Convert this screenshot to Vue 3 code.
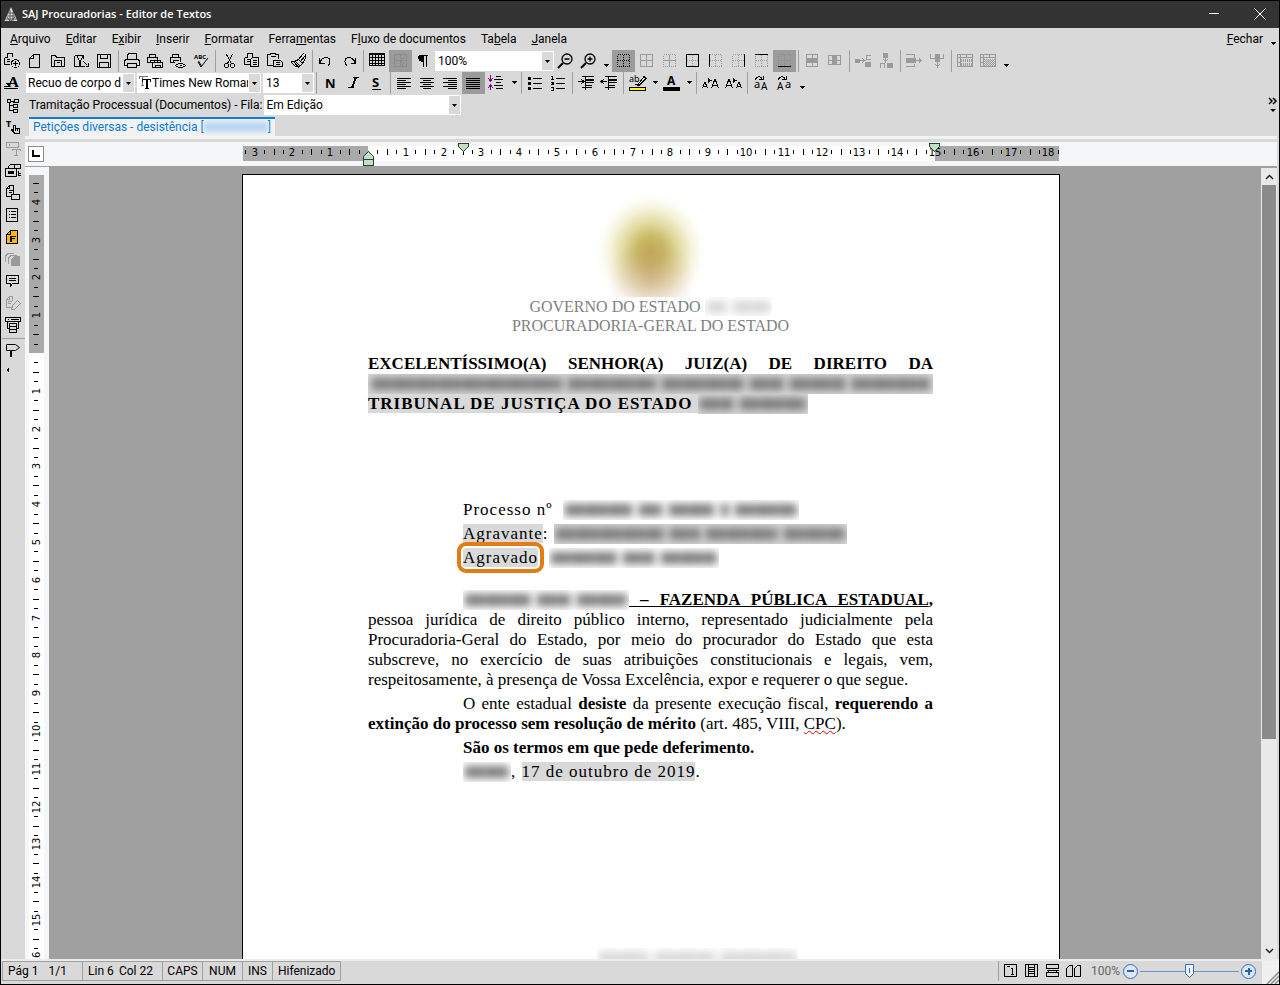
<template>
  <div class="app">
    <header class="titlebar">
      <svg class="logo" width="14" height="16" viewBox="0 0 14 16">
        <path d="M7 1L13.5 15H.5z" fill="#d8d8d8" />
        <path d="M4 7h6M3 10h8M1 13h12M6 4v11M9 6v9M3 11l3 4M11 11l-4 4" stroke="#333" stroke-width=".7" />
      </svg>
      <h1>SAJ Procuradorias - Editor de Textos</h1>
      <button class="win-btn" aria-label="Minimizar">
        <svg width="12" height="12" viewBox="0 0 12 12"><path d="M1 5.5h10" stroke="#fff" /></svg>
      </button>
      <button class="win-btn" aria-label="Sair">
        <svg width="12" height="12" viewBox="0 0 12 12"><path d="M.5.5l11 11M11.5.5l-11 11" stroke="#fff" /></svg>
      </button>
    </header>

    <nav class="menubar">
      <button v-for="m in menus" :key="m.join('')" class="menu">{{ m[0] }}<u>{{ m[1] }}</u>{{ m[2] }}</button>
      <span class="spacer"></span>
      <button class="menu close"><u>F</u>echar</button>
      <button class="more low" aria-label="Mais"><Icon name="arrow" /></button>
    </nav>

    <div class="toolbar">
      <template v-for="(item, i) in mainTools" :key="i">
        <i v-if="item === '|'" class="sep"></i>
        <button v-else-if="item === 'more'" class="more low" aria-label="Mais"><Icon name="arrow" /></button>
        <select v-else-if="item === 'zoom'" class="combo zoom" aria-label="Zoom"><option>100%</option></select>
        <button v-else class="tool" :class="{ on: pressed.includes(item) }" :aria-label="item"><Icon :name="item" /></button>
      </template>
    </div>

    <div class="toolbar">
      <button class="tool" aria-label="Estilos"><Icon name="styles" /></button>
      <select class="combo style" aria-label="Estilo"><option>Recuo de corpo d</option></select>
      <div class="font-box">
        <Icon name="font" />
        <select class="combo font" aria-label="Fonte"><option>Times New Roman</option></select>
      </div>
      <select class="combo size" aria-label="Tamanho"><option>13</option></select>
      <template v-for="(item, i) in formatTools" :key="i">
        <i v-if="item === '|'" class="sep"></i>
        <button v-else-if="item === 'drop'" class="more" aria-label="Opções"><Icon name="arrow" /></button>
        <button v-else-if="item === 'more'" class="more low" aria-label="Mais"><Icon name="arrow" /></button>
        <button v-else class="tool" :class="{ on: pressed.includes(item) }" :aria-label="item"><Icon :name="item" /></button>
      </template>
    </div>

    <div class="workspace">
      <aside class="sidebar">
        <template v-for="(item, i) in sideTools" :key="i">
          <i v-if="item === '-'" class="side-sep"></i>
          <button v-else class="side-tool" :aria-label="item"><Icon :name="item" /></button>
        </template>
      </aside>

      <main class="main">
        <div class="queue">
          <label for="fila">Tramitação Processual (Documentos) - Fila:</label>
          <select id="fila" class="combo queue-select"><option>Em Edição</option></select>
          <span class="spacer"></span>
          <button class="overflow" aria-label="Mais barras"><Icon name="chevrons" /></button>
        </div>

        <div class="tabs">
          <button class="tab">Petições diversas - desistência [<span class="tab-number"></span>]</button>
        </div>

        <div class="ruler-row">
          <button class="tab-stop" aria-label="Tabulação"></button>
          <div class="ruler-wrap">
            <svg class="ruler" width="816" height="24" viewBox="0 0 816 24">
              <rect y="4" width="816" height="15" fill="#a9a9a9" />
              <rect x="125" y="4" width="567" height="15" fill="#fff" />
              <template v-for="t in hTicks" :key="t.pos">
                <text v-if="t.label" :x="t.pos" y="14">{{ t.label }}</text>
                <rect v-else :x="t.pos" :y="t.long ? 7 : 8" width="1" :height="t.long ? 6 : 4" />
              </template>
              <g fill="#c3dfc6" stroke="#20443a">
                <path d="M120.5 17.5v-3l5-5 5 5v3zM120.5 17.5h10v6h-10z" />
                <path d="M215.5 1.5h10v3l-5 5-5-5z" />
                <path d="M686.5 1.5h10v3l-5 5-5-5z" />
              </g>
            </svg>
          </div>
        </div>

        <div class="doc-area">
          <div class="v-ruler">
            <svg class="ruler" width="15" height="1600" viewBox="0 0 15 1600">
              <rect width="15" height="1600" fill="#fff" />
              <rect width="15" height="178" fill="#a9a9a9" />
              <template v-for="t in vTicks" :key="t.pos">
                <text v-if="t.label" x="0" y="0" :transform="`translate(11 ${t.pos}) rotate(-90)`">{{ t.label }}</text>
                <rect v-else :x="t.long ? 4 : 5" :y="t.pos" :width="t.long ? 6 : 4" height="1" />
              </template>
            </svg>
          </div>

          <div class="canvas">
            <article class="page">
              <div class="crest"></div>
              <p class="agency">GOVERNO DO ESTADO <Redacted class="faint" :words="[20, 37]" /></p>
              <p class="agency">PROCURADORIA-GERAL DO ESTADO</p>

              <p class="court spread">EXCELENTÍSSIMO(A) SENHOR(A) JUIZ(A) DE DIREITO DA</p>
              <p class="court-hidden"><Redacted class="field wide" :words="[190, 88, 82, 34, 56, 78]" /></p>
              <p class="court tracked"><span class="mark">TRIBUNAL DE JUSTIÇA DO ESTADO </span><Redacted class="field" :words="[34, 66]" /></p>

              <div class="parties">
                <p>Processo nº&nbsp; <Redacted :words="[68, 24, 46, 8, 62]" /></p>
                <p><span class="mark">Agravante</span>: <Redacted class="field" :words="[108, 30, 72, 61]" /></p>
                <p><span class="mark target">Agravado</span>&nbsp; <Redacted :words="[66, 32, 56]" /></p>
              </div>

              <div class="body">
                <p class="spread indent"><Redacted :words="[66, 34, 50]" /><b><u> – FAZENDA PÚBLICA ESTADUAL</u>,</b></p>
                <p class="spread">pessoa jurídica de direito público interno, representado judicialmente pela</p>
                <p class="spread">Procuradoria-Geral do Estado, por meio do procurador do Estado que esta</p>
                <p class="spread">subscreve, no exercício de suas atribuições constitucionais e legais, vem,</p>
                <p>respeitosamente, à presença de Vossa Excelência, expor e requerer o que segue.</p>
                <p class="spread indent para">O ente estadual <b>desiste</b> da presente execução fiscal, <b>requerendo a</b></p>
                <p><b>extinção do processo sem resolução de mérito</b> (art. 485, VIII, <span class="typo">CPC</span>).</p>
                <p class="indent para"><b>São os termos em que pede deferimento.</b></p>
                <p class="indent para tracked"><Redacted :words="[44]" />, <span class="mark">17 de outubro de 2019</span>.</p>
              </div>
              <div class="page-foot"><Redacted class="faint" :words="[50, 60, 75]" /></div>
            </article>
          </div>

          <div class="scrollbar">
            <button aria-label="Rolar para cima"><svg width="9" height="6" viewBox="0 0 9 6"><path d="M1 5l3.5-3.5L8 5" /></svg></button>
            <div class="thumb"></div>
            <button aria-label="Rolar para baixo"><svg width="9" height="6" viewBox="0 0 9 6"><path d="M1 1l3.5 3.5L8 1" /></svg></button>
          </div>
        </div>
      </main>
    </div>

    <footer class="statusbar">
      <div class="cell page-cell"><span>Pág 1</span><span>1/1</span></div>
      <div class="cell pos-cell"><span>Lin 6</span><span>Col 22</span></div>
      <div class="cell short">CAPS</div>
      <div class="cell short">NUM</div>
      <div class="cell">INS</div>
      <div class="cell">Hifenizado</div>
      <span class="spacer"></span>
      <div class="views">
        <button v-for="v in viewModes" :key="v" class="view" :aria-label="v"><Icon :name="v" /></button>
        <label class="zoom-label" for="zoom">100%</label>
        <button class="round" aria-label="Diminuir"><Icon name="minus" /></button>
        <input id="zoom" v-model="zoom" class="slider" type="range" min="10" max="190" />
        <button class="round" aria-label="Aumentar"><Icon name="plus" /></button>
      </div>
      <svg class="grip" width="17" height="23" viewBox="0 0 17 23"><path d="M5 23L17 11M9 23l8-8M13 23l4-4" stroke="#8a8a8a" stroke-width="1.5" /></svg>
    </footer>
  </div>
</template>

<script setup>
import { h, ref } from 'vue';

const zoom = ref(100);

const menus = [
  ['', 'A', 'rquivo'],
  ['', 'E', 'ditar'],
  ['E', 'x', 'ibir'],
  ['', 'I', 'nserir'],
  ['', 'F', 'ormatar'],
  ['Ferra', 'm', 'entas'],
  ['F', 'l', 'uxo de documentos'],
  ['Ta', 'b', 'ela'],
  ['', 'J', 'anela']
];

const mainTools = [
  'addDoc', 'newDoc', 'open', 'import', 'save', '|',
  'print', 'printAll', 'preview', 'spell', '|',
  'cut', 'copy', 'paste', 'brush', '|',
  'undo', 'redo', '|',
  'table', 'tableDraw', 'pilcrow', 'zoom', 'zoomOut', 'zoomIn', 'more',
  'bNone', 'bAll', 'bInner', 'bOuter', 'bLeft', 'bRight', 'bTop', 'bBottom', '|',
  'mergeRow', 'mergeCol', '|', 'insRow', 'insCol', '|', 'delRow', 'delCol', '|',
  'selRow', 'selTable', 'more'
];

const formatTools = [
  '|', 'bold', 'italic', 'underline', '|',
  'alignLeft', 'alignCenter', 'alignRight', 'justify', 'spacing', 'drop', '|',
  'bullets', 'numbers', '|', 'indent', 'outdent', '|',
  'highlight', 'drop', 'color', 'drop', '|', 'grow', 'shrink', '|', 'lower', 'upper', 'more'
];

const sideTools = [
  'tree', 'textHand', 'fieldText', 'fieldForm', 'docBox', 'list', 'fDoc',
  'stack', 'comment', 'docEdit', 'printForm', '-', 'sign', 'left'
];

const viewModes = ['viewNormal', 'viewPage', 'viewWeb', 'viewBook'];
const pressed = ['tableDraw', 'bNone', 'bBottom', 'justify'];

const G = '#9a9a9a';
const miniPrinter = 'M2.5 4.5v-3h6v3M4.5 9.5h-4v-5h10v4M3.5 8.5v-1h5';
const docCopy = 'M.5 4.5h3v-4h5v3M.5 4.5v7h5M2.5 6.5h3M2.5 8.5h3';
const grid = 'M2.5 1.5h12v12h-12zM2.5 7.5h12M8.5 1.5v12';
const caret = 'M1 6h6l-3 3z';

// s: strokes, d: dotted strokes, f: fills, t: [text, x, y, size], c: colour, x: extra coloured paths
const icons = {
  arrow: { w: 8, f: caret },
  chevrons: { f: 'M6 12h6l-3 3z', s: 'M5 1l3 3-3 3M9 1l3 3-3 3', sw: 1.5, aa: 1 },
  addDoc: { s: docCopy + 'M7.5 10.5a4 4 0 1 0 8 0a4 4 0 1 0-8 0M11.5 8v5M9 10.5h5' },
  newDoc: { s: 'M2.5 5.5v9h10v-13h-6zM2.5 5.5h4v-4' },
  open: { s: 'M1.5 13.5v-11h4l1 2h8v9zM4.5 13.5v-6h7v6M6.5 9.5h3' },
  import: { s: 'M1.5 2.5h9v3M1.5 2.5v11h5v-6l-3-5M10.5 2.5l-3 5v6h4M10.5 8.5l4 4M15.5 10v3.5h-3' },
  save: { s: 'M1.5 1.5h13v13h-13zM4.5 1.5v4h7v-4M3.5 14.5v-5h9v5' },
  print: { s: 'M3.5 6.5v-4l1-2h8v6M3.5 12.5h-3v-5l2-1h11l2 1v5h-3M3.5 10.5h9v4h-9z' },
  printAll: { s: miniPrinter + 'M7.5 9.5v-2h6v2M8.5 14.5h-3v-5h10v5h-3M8.5 12.5h5v2h-5z' },
  preview: { s: miniPrinter + 'M5.5 12.5q5-4 10 0q-5 4-10 0zM9.5 12.5h2' },
  spell: { s: 'M5 9l3 5 7-9M5.5 8l3 5', t: [['ABC', 1, 6, 6]], aa: 1 },
  cut: { s: 'M5.5 1.5l5 9M11.5 1.5l-5 9M3.5 12.5a2 2 0 1 0 4 0a2 2 0 1 0-4 0M9.5 12.5a2 2 0 1 0 4 0a2 2 0 1 0-4 0' },
  copy: { s: docCopy + 'M8.5 4.5h6v9h-8v-7zM8.5 7.5h4M8.5 9.5h4M8.5 11.5h4' },
  paste: { s: 'M5.5 12.5h-5v-11h3v-1h5v1h3v4M3.5 3.5h5M6.5 13.5v-6h7l2 2v4zM8.5 9.5h4M8.5 11.5h4' },
  brush: { s: 'M.5 8.5h4l4-2 4 4-4 4-3-3M1 9l4 4 4 1M3 8l5 5M8.5 6.5l5-6M10.5 8.5l5-6M12.5 10.5l3-5v-5M5 8l5 5' },
  undo: { s: 'M1.5 5v5h5M2 9.5q2-5 6-5t4 4q0 3-2 4' },
  redo: { s: 'M14.5 5v5h-5M14 9.5q-2-5-6-5t-4 4q0 3 2 4' },
  table: { s: 'M.5.5h15v12h-15zM0 1.5h16M.5 4.5h15M.5 7.5h15M.5 10.5h15M3.5 2v11M6.5 2v11M9.5 2v11M12.5 2v11' },
  tableDraw: { c: '#8c8c8c', s: 'M2.5 1.5h12v12h-12zM2.5 7.5h12M8.5 1.5v12M12 4l-3 5h3l-2 4' },
  pilcrow: { f: 'M5 2h8v1h-1v11h-1V3H9v11H8V9C2 9 2 2 5 2z' },
  zoomOut: { s: 'M5 6a5 5 0 1 0 10 0a5 5 0 1 0-10 0M7.5 6h5', x: [['M6 10l-5 5', '#000', 2]], sw: 1.3, aa: 1 },
  zoomIn: { s: 'M5 6a5 5 0 1 0 10 0a5 5 0 1 0-10 0M7.5 6h5M10 3.5v5', x: [['M6 10l-5 5', '#000', 2]], sw: 1.3, aa: 1 },
  bNone: { d: grid },
  bAll: { c: G, s: grid },
  bInner: { c: G, d: grid, s: 'M2.5 7.5h12M8.5 1.5v12' },
  bOuter: { c: G, d: grid, x: [['M2.5 1.5h12v12h-12z', '#000', 1]] },
  bLeft: { c: G, d: grid, x: [['M2.5 1v13', '#000', 1]] },
  bRight: { c: G, d: grid, x: [['M14.5 1v13', '#000', 1]] },
  bTop: { c: G, d: grid, x: [['M2 1.5h13', '#000', 1]] },
  bBottom: { c: '#8c8c8c', d: grid, x: [['M2 13.5h13', '#000', 1]] },
  mergeRow: { c: G, s: 'M2.5 1.5h11v12h-11zM8.5 1v4M8.5 10v4', f: 'M2 5h12v5H2z' },
  mergeCol: { c: G, s: 'M1.5 2.5h12v9h-12zM1.5 7.5h12', f: 'M5 2h5v10H5z' },
  insRow: { c: G, s: 'M0 7.5h9M16 2.5h-5v4h5M7 5.5l3 2-3 2', f: 'M0 6h5v4H0zM10 9h6v5h-6z' },
  insCol: { c: G, s: 'M7.5 0v9M2.5 15v-5h4v5M5.5 6l2 3 2-3', f: 'M5 0h5v5H5zM9 10h6v5H9z' },
  delRow: { c: G, s: 'M0 1.5h8v3M0 13.5h8v-3M9 7.5h7M13 5.5l2 2-2 2', f: 'M0 5h10v5H0z' },
  delCol: { c: G, s: 'M1.5 1v4h4M14.5 1v4h-4M8.5 8v6M6.5 11l2 3 2-3', f: 'M6 1h5v8H6z' },
  selRow: { c: G, s: 'M.5 1.5h15v12h-15zM.5 4.5h15M3.5 1v13M9.5 1v3M.5 9.5h3', d: 'M4 6.5h12M4 8.5h12M4 10.5h12M4 12.5h12M4 7.5h11M4 11.5h11' },
  selTable: { c: G, s: 'M.5 1.5h15v12h-15zM.5 4.5h15M3.5 1v13M9.5 1v3M.5 9.5h3', d: 'M4 6.5h12M5 7.5h11M4 8.5h12M5 9.5h11M4 10.5h12M5 11.5h11M4 12.5h12' },
  styles: { s: 'M0 13.5h14M0 11.5h4l5-9M2.5 8.5h4M5.5 11l-3-3', t: [['A', 4, 12, 15, 'serif']] },
  font: { w: 12, x: [['M.5 4v-2.5h8M3.5 2v9M2 10.5h3', '#777', 1], ['M3 4.5h9M3.5 4v3M11.5 4v3M6 13.5h4', '#000', 1], ['M8 4v10', '#000', 2]] },
  bold: { t: [['N', 3, 13, 13]] },
  italic: { s: 'M8 2.5h6M3 12.5h6', x: [['M11 2l-4 11', '#000', 2]] },
  underline: { s: 'M4 14.5h9', t: [['S', 4, 12, 13]] },
  alignLeft: { s: 'M1 3.5h14M1 5.5h9M1 7.5h14M1 9.5h9M1 11.5h14M1 13.5h9' },
  alignCenter: { s: 'M1 3.5h14M4 5.5h8M1 7.5h14M4 9.5h8M1 11.5h14M4 13.5h8' },
  alignRight: { s: 'M1 3.5h14M6 5.5h9M1 7.5h14M6 9.5h9M1 11.5h14M6 13.5h9' },
  justify: { s: 'M1 3.5h14M1 5.5h14M1 7.5h14M1 9.5h14M1 11.5h14M1 13.5h14' },
  spacing: { s: 'M8 1.5h5M6 4.5h9M8 7.5h5M6 10.5h9M8 13.5h7', x: [['M2.5 0v5M0 3l2.5 3 2.5-3M2.5 15v-5M0 13l2.5-3 2.5 3', '#800080', 1]] },
  bullets: { f: 'M1 2h3v3H1zM1 7h3v3H1zM1 12h3v3H1z', s: 'M6 3.5h9M6 8.5h9M6 13.5h9' },
  numbers: { s: 'M6 3.5h9M6 8.5h9M6 13.5h9M1 1.5h1.5v3M1 4.5h3M1 7.5h2v1l-2 1h3M1 12h2.5v3h-2.5' },
  indent: { s: 'M4 1.5h12M8 7.5h8M8 10.5h6M4 12.5h10M7.5 1v14M0 6.5h5M3 4l3 2.5L3 9', x: [['M8 4.5h8', '#000', 2]] },
  outdent: { s: 'M4 1.5h12M8 7.5h8M8 10.5h6M4 12.5h10M7.5 1v14M1 6.5h5M3 4L0 6.5 3 9', x: [['M8 4.5h8', '#000', 2]] },
  highlight: { s: 'M6 9.5h3l6-8 2 2-7 7zM6 10l3-1', t: [['ab', 0, 7, 9, '', 400]], x: [['M0 12h17v4H0z', '#000', 0], ['M1 13h15v2H1z', '#ff0', 0]] },
  color: { t: [['A', 4, 10, 12]], f: 'M0 12h17v4H0z' },
  grow: { s: 'M.5 13l2.5-6 2.5 6M1 11.5h4M9.5 13l3.5-9 3.5 9M11 10.5h4', f: 'M6 3l4 2.5-4 2.5z' },
  shrink: { s: 'M.5 13l3.5-9 3.5 9M2 10.5h4M11.5 13l2.5-6 2.5 6M12 11.5h4', f: 'M8 3l4 2.5-4 2.5z' },
  lower: { s: 'M2 4.5q4-5 7-1M6 4.5h4v-4', t: [['a', 1, 13, 11, '', 400], ['A', 8, 15, 10, '', 400]] },
  upper: { s: 'M2 4.5q4-5 7-1M6 4.5h4v-4', t: [['A', 1, 15, 10, '', 400], ['a', 9, 13, 11, '', 400]] },
  tree: { s: 'M2.5 2.5h3v3h-3zM4.5 6v7.5h4M4.5 8.5h4M6 4.5h3.5v-2h4v3h-4zM8.5 7.5h4v3h-4zM8.5 12.5h4v2.500h-4z' },
  textHand: { t: [['T', 1, 8, 9]], s: 'M8.5 12v-6h2v3l4 1v4h-5l-3-3 2-1M10.5 9v3M12.5 9v3' },
  fieldText: { c: G, s: 'M1.5 1.5h12v5h-12zM4.5 3v2M7 10v-1.5h8v1.5M11.5 8.5v6M9 14.5h4' },
  fieldForm: { s: 'M3.5 3.5l2-2h10v4h-12zM.5 5.5h11v8h-11zM9.5 2v3M13.5 8v4h2M14 10.5h2', f: 'M3 8h6v3H3z' },
  docBox: { s: 'M8.5.5h-4l-3 3v8h4M4.5.5v3h-3M8.5.5v8M3.5 5.5h4M3.5 7.5h3M6.5 9.5h8v5h-8z' },
  list: { s: 'M1.5 1.5h11v13h-11zM3.5 4.5h1M6 4.5h5M3.5 7.5h1M6 7.5h5M3.5 10.5h1M6 10.5h5' },
  fDoc: { x: [['M5.5 1.5h7v13h-11v-9z', '#fbb800', 0]], s: 'M5.5 1.5h7v13h-11v-9zM1.5 5.5h4v-4M5.5 12.5v-5h5M5.5 9.5h4M6.5 8v5' },
  stack: { c: G, s: 'M.5 11v-6l3-3h5M3.5 13v-6l3-3h5', f: 'M6 8l3-3h6v10H6z' },
  comment: { s: 'M1.5 2.5h12v8h-6l-2 3v-3h-4zM4 5.5h7M4 7.5h7' },
  docEdit: { c: G, s: 'M7.5 1.5h-3l-3 3v8h4M4.5 1.5v3h-3M7.5 1.5v4M3 6.5h4M3 8.5h3M6.5 14.5l1-4 5-5 3 3-6 6z' },
  printForm: { s: 'M.5.5h15v4h-15zM3 2.5h1M6 2.5h8M2.5 5v6h2M13.5 5v6h-2M4.5 6.5h7v9h-7zM4.5 9.5h7M4.5 12.5h7' },
  sign: { s: 'M1.5 2.5h9l4 3-4 3h-9zM5.5 9v6M6.5 9v6', aa: 1 },
  left: { f: 'M4 3v6l-3-3z' },
  viewNormal: { s: 'M2.5 1.5h12v12h-12zM5 3.5h3M8.5 5.5h2v6M9 11.5h3' },
  viewPage: { s: 'M2.5 1.5h12v12h-12zM5.5 2v11M11.5 2v11M6 4.5h5M6 6.5h5M6 8.5h5M6 10.5h5' },
  viewWeb: { s: 'M2.5 5.5v-4h12v4zM2.5 7.5h12M4.5 7.5v2h8v-2M2.5 13.5v-4h12v4z' },
  viewBook: { s: 'M1.5 13.5v-8l3-3h3v11zM9.5 13.5v-8l3-3h3v11z' },
  minus: { s: 'M5 8h7', c: '#2f62ae', sw: 2 },
  plus: { s: 'M5 8h7M8.5 4.5v7', c: '#2f62ae', sw: 2 }
};

const Icon = ({ name }) => {
  const ic = icons[name];
  const c = ic.c || '#000';
  const w = ic.w || 17;
  return h('svg', {
    width: w,
    height: 16,
    viewBox: `0 0 ${w} 16`,
    fill: 'none',
    overflow: 'visible',
    'shape-rendering': ic.aa ? 'auto' : 'crispEdges'
  }, [
    ic.d && h('path', { d: ic.d, stroke: c, 'stroke-dasharray': '1 1' }),
    ic.x && ic.x.filter(p => !p[2]).map(p => h('path', { d: p[0], fill: p[1] })),
    ic.s && h('path', { d: ic.s, stroke: c, 'stroke-width': ic.sw || 1 }),
    ic.f && h('path', { d: ic.f, fill: c }),
    ic.x && ic.x.filter(p => p[2]).map(p => h('path', { d: p[0], stroke: p[1], 'stroke-width': p[2] })),
    ic.t && ic.t.map(t => h('text', {
      x: t[1],
      y: t[2],
      fill: c,
      'font-size': t[3],
      'font-weight': t[5] || 700,
      'font-family': t[4] ? 'Liberation Serif, serif' : 'Noto Sans, sans-serif'
    }, t[0]))
  ]);
};
Icon.props = ['name'];

// Hidden personal data: one blurred bar per word
const Redacted = ({ words }) => h('span', { class: 'redacted' },
  words.map(w => h('i', { class: 'hidden-word', style: { width: w + 'px' } })));
Redacted.props = ['words'];

// Ruler marks, four per centimetre
const CM = 37.8;
const ticks = (origin, from, to) => {
  const list = [];
  for (let q = from; q <= to; q++) {
    if (q === 0) continue;
    list.push({
      pos: Math.round(origin + (q * CM) / 4),
      label: q % 4 === 0 ? String(Math.abs(q / 4)) : '',
      long: q % 2 === 0
    });
  }
  return list;
};
const hTicks = ticks(125, -13, 73);
const vTicks = ticks(178, -18, 64);
</script>

<style>
body {
  margin: 0;
}

.redacted {
  display: inline-flex;
  align-items: center;
  gap: 6px;
  height: 20px;
  padding: 0 2px;
  overflow: hidden;
  vertical-align: top;
}

.hidden-word {
  height: 12px;
  background: repeating-linear-gradient(90deg, #6c6c6c 0 7px, #909090 7px 10px, #757575 10px 19px, #979797 19px 23px);
  filter: blur(4px);
}
</style>

<style scoped>
.app {
  display: flex;
  flex-direction: column;
  height: 100vh;
  box-sizing: border-box;
  border: 1px solid #000;
  background: #d9d9d9;
  color: #000;
  font-family: Roboto, "Noto Sans", sans-serif;
  font-size: 12px;
  line-height: 16px;
  overflow: hidden;
}

button,
select {
  font: inherit;
  color: inherit;
}

button {
  padding: 0;
  border: 0;
  background: none;
}

p {
  margin: 0;
}

.spacer {
  flex: 1;
}

/* Title bar */
.titlebar {
  display: flex;
  align-items: center;
  height: 27px;
  flex: none;
  padding: 0 3px 2px;
  box-sizing: border-box;
  background: #333;
  color: #fff;
}

.titlebar h1 {
  flex: 1;
  margin: 0 0 0 4px;
  font-family: "Open Sans", "Noto Sans", sans-serif;
  font-size: 11px;
  font-weight: 600;
}

.win-btn {
  display: flex;
  align-items: center;
  justify-content: center;
  width: 32px;
  height: 25px;
  margin-left: 14px;
}

/* Menu */
.menubar {
  display: flex;
  align-items: center;
  height: 22px;
  flex: none;
  padding-left: 1px;
}

.menu {
  padding: 0 7px 0 8px;
}

.menu.close {
  padding-right: 4px;
}

/* Toolbars */
.toolbar {
  display: flex;
  height: 22px;
  flex: none;
}

.tool {
  display: flex;
  align-items: center;
  justify-content: center;
  width: 23px;
  height: 22px;
  flex: none;
}

.tool.on {
  background: #9b9b9b;
}

.sep {
  width: 1px;
  margin: 0 2px;
  background: #a0a0a0;
  flex: none;
}

.more {
  display: flex;
  align-items: center;
  justify-content: center;
  width: 11px;
  height: 22px;
  flex: none;
}

.more.low {
  width: 12px;
  padding-top: 10px;
}

.combo {
  appearance: none;
  box-sizing: border-box;
  height: 20px;
  margin: 1px 0;
  padding: 0 12px 0 2px;
  border: 1px solid #fff;
  border-radius: 0;
  outline: none;
  background: url("data:image/svg+xml,%3Csvg xmlns='http://www.w3.org/2000/svg' width='11' height='18'%3E%3Cpath fill='%23d9d9d9' d='M0 0h11v18H0z'/%3E%3Cpath d='M3 8h5l-2.5 3z'/%3E%3C/svg%3E") right center no-repeat #fff;
  overflow: hidden;
}

.combo.zoom {
  width: 119px;
}

.combo.style {
  width: 109px;
  margin: 1px 2px;
  padding-left: 1px;
}

.font-box {
  display: flex;
  align-items: center;
  width: 124px;
  height: 20px;
  margin: 1px 2px 1px 0;
  padding-left: 2px;
  box-sizing: border-box;
  background: #fff;
}

.combo.font {
  width: 110px;
  margin: 0;
  padding-left: 0;
}

.combo.size {
  width: 51px;
}

/* Side tools */
.workspace {
  display: flex;
  flex: 1;
  min-height: 0;
}

.sidebar {
  display: flex;
  flex-direction: column;
  width: 24px;
  flex: none;
}

.side-tool {
  display: flex;
  align-items: center;
  padding-left: 4px;
  height: 22px;
}

.side-sep {
  height: 1px;
  margin: 2px 0 0 1px;
  background: #a0a0a0;
}

.main {
  display: flex;
  flex-direction: column;
  flex: 1;
  min-width: 0;
  margin-right: 2px;
}

.queue {
  display: flex;
  align-items: center;
  height: 22px;
  flex: none;
  gap: 2px;
  padding-left: 4px;
}

.queue-select {
  width: 197px;
  padding-left: 1px;
}

.overflow {
  display: flex;
  margin-right: -4px;
}

.tabs {
  display: flex;
  height: 19px;
  flex: none;
  padding: 1px 0 0 4px;
  border-bottom: 3px solid #f2f2f2;
  box-sizing: content-box;
}

.tab {
  display: flex;
  padding: 0 4px;
  border-top: 2px solid #0a7ad8;
  background: #f2f2f2;
  color: #0a7ad8;
}

.tab-number {
  width: 64px;
  height: 10px;
  margin: 3px 0;
  background: #b9d7f2;
  filter: blur(2px);
}

/* Rulers */
.ruler-row {
  display: flex;
  height: 24px;
  flex: none;
  margin-top: 3px;
  padding: 0 19px 0 3px;
  background: #f5f6f8;
}

.tab-stop {
  position: relative;
  width: 16px;
  height: 16px;
  margin-top: 4px;
  box-sizing: border-box;
  border: 1px solid #8c8c8c;
  background: #fff;
}

.tab-stop::after {
  content: "";
  position: absolute;
  left: 3px;
  top: 3px;
  width: 6px;
  height: 5px;
  border: solid #000;
  border-width: 0 0 2px 2px;
}

.ruler-wrap {
  display: flex;
  justify-content: center;
  flex: 1;
}

.ruler {
  flex: none;
  shape-rendering: crispEdges;
}

.ruler text {
  font: 10px "DejaVu Sans", sans-serif;
  text-anchor: middle;
}

.doc-area {
  display: flex;
  flex: 1;
  min-height: 0;
  background: #a0a0a0;
}

.v-ruler {
  width: 24px;
  flex: none;
  margin-top: 1px;
  padding: 8px 0 0 4px;
  box-sizing: border-box;
  background: #f5f6f8;
  overflow: hidden;
}

/* Page */
.canvas {
  display: flex;
  justify-content: center;
  flex: 1;
  min-width: 0;
  padding: 9px 8px 0 0;
  overflow: hidden;
}

.page {
  display: flow-root;
  width: 816px;
  flex: none;
  box-sizing: border-box;
  padding: 0 126px 0 125px;
  outline: 1px solid #000;
  background: #fff;
  font-family: "Liberation Serif", serif;
  font-size: 17px;
  line-height: 20px;
  white-space: nowrap;
}

.crest {
  height: 122px;
  background: radial-gradient(ellipse 44px 40px at 283px 104px, rgba(196, 150, 130, 0.45), transparent),
    radial-gradient(ellipse 58px 62px at 283px 77px, #c0a952 0%, #c9b964 24%, #e2dba2 48%, #f5f3dc 70%, #fdfdf8 86%, #fff 100%);
}

.agency {
  color: #808080;
  font-size: 16px;
  line-height: 19px;
  text-align: center;
}

.court {
  font-weight: 700;
}

.court.spread {
  margin-top: 19px;
}

.tracked,
.parties {
  letter-spacing: 1px;
}

.spread {
  text-align: justify;
  text-align-last: justify;
}

.mark {
  background: #d9d9d9;
}

.redacted.field {
  background: #d9d9d9;
}

.redacted.wide {
  display: flex;
  justify-content: center;
}

.redacted.faint {
  opacity: 0.3;
  height: 19px;
}

.parties {
  margin: 86px 0 22px 95px;
}

.parties p + p,
.para {
  margin-top: 4px;
}

.target {
  outline: 4px solid #e47c16;
  outline-offset: 2px;
  border-radius: 3px;
}

.indent {
  padding-left: 95px;
}

.typo {
  text-decoration: underline wavy #d00 1px;
}

.page-foot {
  margin: 166px 0 0 229px;
}

/* Scroll bar */
.scrollbar {
  display: flex;
  flex-direction: column;
  width: 16px;
  flex: none;
  margin-top: 2px;
  background: #e9e9e9;
}

.scrollbar button {
  display: flex;
  align-items: center;
  justify-content: center;
  height: 17px;
  flex: none;
}

.scrollbar path {
  fill: none;
  stroke: #222;
  stroke-width: 1.5;
}

.thumb {
  height: 70%;
  flex: none;
  margin: 0 1px auto;
  background: #8a8a8a;
}

/* Status bar */
.statusbar {
  display: flex;
  height: 23px;
  flex: none;
  padding: 0 0 0 1px;
  border-top: 2px solid #ececec;
}

.cell {
  display: flex;
  justify-content: space-between;
  height: 18px;
  margin: 0 -1px 0 0;
  padding: 0 5px;
  border: 1px solid #a0a0a0;
  line-height: 18px;
}

.short {
  justify-content: center;
  width: 29px;
}

.page-cell {
  width: 69px;
  padding-right: 15px;
  width: 59px;
}

.pos-cell {
  width: 65px;
  padding-right: 9px;
}

.views {
  display: flex;
  align-items: center;
  height: 20px;
  padding-left: 3px;
  border-left: 1px solid #a0a0a0;
}

.view {
  display: flex;
  margin-right: 4px;
}

.zoom-label {
  margin: 0 3px 0 5px;
  color: #666;
}

.round {
  display: flex;
  align-items: center;
  justify-content: center;
  width: 15px;
  height: 15px;
  box-sizing: border-box;
  border: 1px solid #3b6cb4;
  border-radius: 50%;
  background: #dbe8f8;
}

.slider {
  appearance: none;
  width: 99px;
  height: 15px;
  margin: 0 2px;
  background: linear-gradient(#6f93c8, #6f93c8) center / 100% 1px no-repeat;
}

.slider::-webkit-slider-thumb {
  appearance: none;
  width: 9px;
  height: 14px;
  background: url("data:image/svg+xml,%3Csvg xmlns='http://www.w3.org/2000/svg' width='9' height='14'%3E%3Cpath fill='%23eef4fc' stroke='%233b6cb4' d='M.5.5h8v9l-4 4-4-4zM4.5 4v5'/%3E%3C/svg%3E");
}

.grip {
  margin-left: 6px;
  background: #f0f0f0;
}
</style>
